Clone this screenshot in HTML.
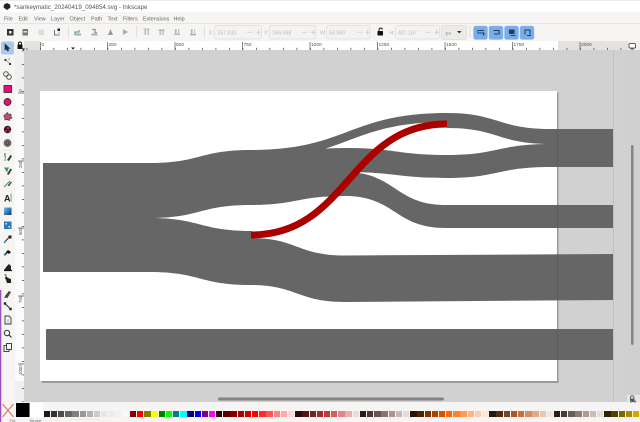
<!DOCTYPE html>
<html><head><meta charset="utf-8"><title>Inkscape</title>
<style>
html,body{margin:0;padding:0;background:#f6f5f4;width:640px;height:422px;overflow:hidden}
svg{position:absolute;left:0;top:0;font-family:"Liberation Sans",sans-serif;filter:blur(.3px)}
#pal{position:absolute;left:43.6px;top:410.7px;height:6.6px;display:flex;width:600px;filter:blur(.3px)}
#pal i{display:block;width:6.4px;margin-right:.8px;height:6.6px;flex:none}
</style></head><body>
<svg width="640" height="422" viewBox="0 0 640 422">
<defs>
<pattern id="tx" x="40" y="0" width="13.5" height="9" patternUnits="userSpaceOnUse"><rect x="0" y="6.800" width=".8" height="2.200" fill="#555"/></pattern>
<pattern id="ty" x="0" y="91" width="9" height="13.5" patternUnits="userSpaceOnUse"><rect x="6.800" y="0" width="2.200" height=".8" fill="#555"/></pattern>
<linearGradient id="g1" x1="0" y1="0" x2="1" y2="1"><stop offset="0" stop-color="#6fc0ef"/><stop offset="1" stop-color="#073a6c"/></linearGradient>
</defs>
<rect width="640" height="422" fill="#f6f5f4"/>
<rect width="640" height="12" fill="#fff"/>
<rect y="0" width="640" height="1" fill="#eceae8"/>
<rect y="23" width="640" height="1" fill="#e6e4e1"/>
<path d="M7 3l3 1.500 .5 3-3.500 2.500-3.500-2.500 .5-3z" fill="#222"/>
<text x="14" y="8.800" font-size="6.200" fill="#555">*sankeymatic_20240419_094854.svg - Inkscape</text>
<g font-size="5.400" fill="#666">
<text x="4" y="20.500">File</text><text x="18.500" y="20.500">Edit</text><text x="34" y="20.500">View</text><text x="51" y="20.500">Layer</text><text x="69.500" y="20.500">Object</text><text x="91" y="20.500">Path</text><text x="107.500" y="20.500">Text</text><text x="123" y="20.500">Filters</text><text x="143" y="20.500">Extensions</text><text x="173.500" y="20.500">Help</text>
</g>

<!-- top toolbar icons -->
<g>
<rect x="7" y="29" width="6.500" height="6.500" fill="#333"/><rect x="9" y="31" width="2.500" height="2.500" fill="#eee"/>
<rect x="22.500" y="29" width="5.500" height="6.500" fill="#777"/><rect x="23.500" y="31" width="3.500" height="1.500" fill="#ddd"/>
<rect x="38.500" y="29.500" width="5.500" height="5.500" fill="#ddd"/>
<path d="M54.500 30v5h5" fill="none" stroke="#555" stroke-width=".8"/><rect x="57.500" y="28.500" width="2.500" height="2.500" fill="#222"/><path d="M59 32v3" stroke="#999" stroke-width=".8"/>
<path d="M75 35v-3h4v-2" fill="none" stroke="#6fa887" stroke-width="1.300"/><rect x="75" y="33.500" width="6" height="2" fill="#aaa"/>
<path d="M92 29.500h3v3h2" fill="none" stroke="#6fa887" stroke-width="1.300"/><rect x="91.500" y="33.500" width="6" height="2" fill="#aaa"/>
<path d="M108 35l2.500-6 2.500 6z" fill="#999"/>
<path d="M123 29v6l5-3z" fill="#aaa"/>
<rect x="143.500" y="28.500" width="6" height="1.300" fill="#bbb"/><rect x="144.500" y="30" width="1.500" height="5" fill="#bbb"/><rect x="147.500" y="30" width="1.200" height="5" fill="#8cc5a0"/>
<rect x="158.500" y="29.500" width="6" height="1.300" fill="#aaa"/><rect x="159.500" y="31" width="1.500" height="4" fill="#bbb"/><rect x="162.500" y="31" width="1.200" height="4" fill="#8cc5a0"/>
<rect x="174" y="33.500" width="6" height="1.300" fill="#aaa"/><rect x="175" y="29" width="1.500" height="4" fill="#8cc5a0"/><rect x="178" y="29" width="1.200" height="4" fill="#bbb"/>
<rect x="190" y="34" width="6" height="1.300" fill="#aaa"/><rect x="191" y="29" width="1.500" height="5" fill="#8cc5a0"/><rect x="194" y="29" width="1.200" height="5" fill="#ccc"/>
</g>
<g fill="#e2e0dd"><rect x="68" y="26" width="1" height="12"/><rect x="136" y="26" width="1" height="12"/><rect x="204" y="26" width="1" height="12"/><rect x="469.500" y="26" width="1" height="12"/></g>

<!-- number fields -->
<g fill="#f4f3f1" stroke="#dedcd9" stroke-width=".7">
<rect x="214.500" y="25.500" width="47" height="13.500" rx="2"/>
<rect x="269.500" y="25.500" width="46.500" height="13.500" rx="2"/>
<rect x="326.500" y="25.500" width="43.500" height="13.500" rx="2"/>
<rect x="395.500" y="25.500" width="44" height="13.500" rx="2"/>
</g>
<rect x="441.500" y="25.500" width="25" height="14" rx="2" fill="#ecebe8" stroke="#dcdad7" stroke-width=".7"/>
<g font-size="5.200" fill="#bbb">
<text x="208.500" y="34.300">X:</text><text x="217.500" y="34.300">357.833</text>
<text x="264" y="34.300">Y:</text><text x="272.500" y="34.300">266.068</text>
<text x="320" y="34.300">W:</text><text x="329" y="34.300">54.580</text>
<text x="389.500" y="34.300">H:</text><text x="398" y="34.300">407.167</text>
<text x="445.500" y="34.800" fill="#999">px</text>
</g>
<path d="M457 31h4.500l-2.250 2.500z" fill="#333"/>
<g stroke="#c5c5c5" stroke-width=".7" fill="none">
<path d="M247 32.200h5M256 32.200h5M258.500 29.700v5M302 32.200h5M311 32.200h5M313.500 29.700v5M357 32.200h5M365.500 32.200h4.500M367.700 29.700v5M425 32.200h5M434 32.200h5M436.500 29.700v5"/>
</g>
<rect x="377.500" y="31" width="5.500" height="4.500" rx=".6" fill="#111"/><path d="M379 31v-1.500a1.800 1.800 0 0 1 3.500 0" fill="none" stroke="#111" stroke-width=".9"/>

<!-- snap buttons -->
<g fill="#78aceb" stroke="#9ac0ee" stroke-width=".5">
<rect x="473.500" y="26" width="14" height="13.500" rx="2"/><rect x="489" y="26" width="14" height="13.500" rx="2"/><rect x="504.500" y="26" width="14" height="13.500" rx="2"/><rect x="520" y="26" width="14" height="13.500" rx="2"/>
</g>
<g fill="#2a3b52">
<rect x="478" y="30" width="6" height="1"/><rect x="478" y="32.500" width="6.500" height="1"/><rect x="483" y="33.500" width="1.200" height="2"/><rect x="477" y="30" width="1" height="3.500" opacity=".6"/>
<rect x="493.500" y="30" width="6" height="1"/><rect x="498.500" y="31" width="1.200" height="3.500"/><rect x="494" y="33.500" width="4" height="1"/>
<rect x="509" y="29.500" width="5.500" height="4.500"/><rect x="510.500" y="35" width="5" height="1"/>
<rect x="524.500" y="29.500" width="6" height="1"/><rect x="524.500" y="29.500" width="1" height="5"/><rect x="529.500" y="29.500" width="1" height="5"/><rect x="527" y="35" width="4" height="1"/>
</g>

<!-- canvas -->
<rect x="24" y="50" width="616" height="352" fill="#d1d1d1"/>
<rect x="627" y="50" width="13" height="352" fill="#d0d0d0"/>
<rect x="41.500" y="92.500" width="517" height="290.500" fill="#9a9a9a"/>
<rect x="40" y="91" width="517" height="290" fill="#fff"/>
<rect x="613" y="50" width=".8" height="352" fill="#a9c1d6"/>

<!-- sankey -->
<g fill="#666">
<path d="M43 163H150.500V272H43Z"/>
<path d="M150 163C200 163 200 150 250.500 150V205C200 205 200 218 150 218Z"/>
<path d="M150 218C200 218 200 231 252 231V285H250C200 285 200 272 150 272Z"/>
<path d="M250 150C348 150 348 113 447.500 113V122C348 122 348 159 250 159Z"/>
<path d="M250 158C290 155 305 148 345.500 148V196C297 196 297 205 250 205Z"/>
<path d="M345 148C396 148 396 155 447.500 155V178C396 178 396 172 345 172Z"/>
<path d="M345 172C395 172 395 205 445.500 205H613V228H445C395 228 395 196 345 196Z"/>
<path d="M447 113C498 113 498 129 550 129H613V167H550C498 167 498 178 447 178V155C498 155 498 144 550 144C498 144 498 128 447 128Z"/>
<path d="M250 238C297 238 297 255.500 345 255.500L613 254V300L345 302C297 302 297 285 250 285Z"/>
<path d="M47 329H613V360H47Q46 360 46 359V330Q46 329 47 329Z"/>
</g>
<rect x="557" y="129" width="1" height="38" fill="#000" opacity=".1"/>
<rect x="557" y="205" width="1" height="23" fill="#000" opacity=".1"/>
<rect x="557" y="254" width="1" height="46" fill="#000" opacity=".1"/>
<rect x="557" y="329" width="1" height="31" fill="#000" opacity=".1"/>
<path d="M251 235C349 235 349 124 447 124" fill="none" stroke="#aa0000" stroke-width="7"/>

<!-- rulers -->
<rect x="24" y="41" width="604" height="9" fill="#e3e2de"/>
<rect x="40" y="41" width="518" height="9" fill="#fff"/>
<g transform="translate(0,41)"><rect x="24" y="0" width="604" height="9" fill="url(#tx)"/></g>
<path stroke="#555" stroke-width=".7" d="M40.500 42v8M107.500 42v8M175 42v8M242.500 42v8M310 42v8M377.500 42v8M445 42v8M512.500 42v8M580 42v8"/>
<g font-size="4.800" fill="#555">
<text x="41.500" y="46">0</text><text x="108.500" y="46">250</text><text x="176" y="46">500</text><text x="243.500" y="46">750</text><text x="311" y="46">1000</text><text x="378.500" y="46">1250</text><text x="446" y="46">1500</text><text x="513.500" y="46">1750</text><text x="581" y="46">2000</text>
</g>
<path d="M71 47.500h4l-2 2z" fill="#111"/>
<rect x="15" y="41" width="9" height="361" fill="#f1f0ee"/>
<rect x="15" y="91" width="9" height="290" fill="#fbfbfa"/>
<g transform="translate(15,0)"><rect x="0" y="50" width="9" height="352" fill="url(#ty)"/></g>
<path stroke="#555" stroke-width=".7" d="M18 93h6M18 161h6M18 228h6M18 296h6M18 364h6"/>
<g font-size="4.800" fill="#555">
<text transform="translate(22,92) rotate(-90)">0</text>
<text transform="translate(22,168) rotate(-90) scale(.9)">250</text>
<text transform="translate(22,235) rotate(-90) scale(.9)">500</text>
<text transform="translate(22,303) rotate(-90) scale(.9)">750</text>
<text transform="translate(22,375) rotate(-90) scale(.9)">1000</text>
</g>
<!-- corner lock -->
<rect x="15" y="41" width="9" height="9" fill="#f6f5f4"/>
<path d="M22 48.500h3l-1.500 2z" fill="#111"/>
<rect x="17.500" y="44.500" width="5" height="4.500" rx=".6" fill="#111"/><path d="M18.500 44.500v-1a1.500 1.500 0 0 1 3 0v1" fill="none" stroke="#111" stroke-width=".9"/>
<!-- top right / bottom right -->
<rect x="628" y="41" width="12" height="9" fill="#f0efed"/>
<rect x="629" y="43.500" width="6.500" height="4.500" rx="1" fill="#fff" stroke="#333" stroke-width=".8"/><path d="M630.500 49h3.500" stroke="#333" stroke-width=".8"/>
<rect x="627" y="395" width="13" height="8" fill="#e7e6e3"/>
<path d="M630.500 399v-1.500a1.700 1.700 0 0 1 3.400 0v1.500" fill="none" stroke="#444" stroke-width=".8"/><rect x="630" y="398.500" width="4.500" height="3.500" fill="#555"/><circle cx="631" cy="401.500" r="1.100" fill="#2e9c5b"/><circle cx="635" cy="401.500" r="1.100" fill="#d0458a"/>
<!-- scrollbars -->
<rect x="218" y="397.500" width="226" height="3" rx="1.500" fill="#848484"/>
<rect x="631" y="145" width="2.500" height="200" rx="1.200" fill="#848484"/>

<!-- left tool bar -->
<rect x="0" y="41" width="15" height="361" fill="#f6f5f4"/>
<rect x="1" y="41.500" width="13" height="13" rx="2" fill="#a9c9ee"/>
<path d="M5 44v6l1.500-1 1 2 1.200-.5-1-2h2z" fill="#1d2f45" stroke="#1d2f45" stroke-width=".6"/>
<path d="M4.500 59h2v2h-2zM9 63h2v2H9z" fill="#333"/><path d="M7 61l2 2" stroke="#888" stroke-width=".8"/><rect x="8.500" y="58.500" width="1.500" height="1.500" fill="#999"/>
<circle cx="6" cy="74" r="2.300" fill="none" stroke="#444" stroke-width=".9"/><circle cx="9" cy="77" r="2.300" fill="none" stroke="#444" stroke-width=".9"/>
<rect x="4" y="85.500" width="7.500" height="7" fill="#ee0a76" stroke="#333" stroke-width=".9"/>
<circle cx="7.500" cy="102" r="3.500" fill="#ee0a76" stroke="#333" stroke-width=".9"/>
<path d="M7.500 112.500l1.200 2 2.300-.5 0 2.500 1 1.500-2.300 1-.5 1.500-2-1-2.300.5-.2-2.500-1-1.500 1.500-1.500z" fill="#c04a80" stroke="#444" stroke-width=".7"/>
<circle cx="7.500" cy="129.500" r="3.700" fill="#222"/><circle cx="8" cy="128" r="1.300" fill="#ee0a76"/><circle cx="6" cy="131" r="1" fill="#ee0a76"/><circle cx="9.500" cy="131" r="1" fill="#ee0a76"/>
<circle cx="7.500" cy="143" r="3.500" fill="#777" stroke="#555" stroke-width=".7"/><circle cx="7.500" cy="143" r="1.500" fill="none" stroke="#333" stroke-width=".7"/>
<rect x="2" y="81.800" width="11" height=".6" fill="#e6e4e1"/>
<rect x="2" y="149.800" width="11" height=".6" fill="#e6e4e1"/>
<path d="M4.500 153.500l1 5M4 154h2M4 160h2" stroke="#3a9b58" stroke-width="1.100" fill="none"/><path d="M7 160l3.500-5 1.500 1-3 5z" fill="#333"/>
<path d="M4 167.500h5l-2 5z" fill="#3a9b58"/><path d="M7 174l3.500-5.500 1.500 1-3.500 5.500z" fill="#333"/>
<path d="M4 187l6-6" stroke="#4c9f66" stroke-width="1.200"/><path d="M7.500 185.500l3.500-4 1 .7-3 4z" fill="#444"/>
<text x="4" y="201.500" font-size="9" font-weight="bold" fill="#222">A</text><rect x="10.600" y="193.500" width=".9" height="8" fill="#2fb25a"/>
<rect x="4" y="207.500" width="7.500" height="7.500" fill="url(#g1)"/>
<rect x="4" y="221.500" width="7.500" height="7.500" fill="#2f78b5"/><path d="M5.500 223h1.500v1.500h-1.500zM8.500 226h1.500v1.500H8.500z" fill="#e6f0f8"/>
<path d="M4.500 242l5-5" stroke="#333" stroke-width="1.200"/><rect x="8.500" y="235.500" width="3" height="3" fill="#222"/><path d="M4 243l1.500-1.500" stroke="#2aa8df" stroke-width="1.500"/>
<path d="M4.500 255l4-4" stroke="#222" stroke-width="1.400"/><path d="M8 250l3 2-2 2-3-2z" fill="#111"/><path d="M4 254l1.500 1.500" stroke="#2c7fd1" stroke-width="1.500"/>
<path d="M4 270l3-4 2-2 2 2v4z" fill="#222"/><path d="M4 270.500h8" stroke="#111" stroke-width="1.200"/>
<path d="M6 276l2 2 3 1v4H7l-1-3-1-2z" fill="#222"/><circle cx="5.500" cy="275" r="1" fill="#777"/>
<path d="M5 296l4-5 2 1-3 5-3 .5z" fill="#444"/><path d="M4 297.500h4" stroke="#d0458a" stroke-width="1"/>
<path d="M5 303.500l5 5" stroke="#333" stroke-width="1.100"/><rect x="3.800" y="302.300" width="2.400" height="2.400" fill="#222"/><rect x="9.300" y="307.800" width="2.400" height="2.400" fill="#222"/>
<path d="M5 316h4l2 2v6H5z" fill="#fff" stroke="#333" stroke-width=".9"/><path d="M6.500 320h3M6.500 322h3" stroke="#555" stroke-width=".5"/>
<circle cx="7" cy="333" r="2.700" fill="none" stroke="#333" stroke-width="1"/><path d="M9 335l2.500 2.500" stroke="#333" stroke-width="1.200"/>
<rect x="4" y="345.500" width="5" height="6" fill="none" stroke="#333" stroke-width=".9"/><rect x="6.500" y="343.500" width="5" height="6" fill="#f6f5f4" stroke="#333" stroke-width=".9"/>

<!-- bottom -->
<rect x="0" y="402.500" width="640" height="20" fill="#f6f5f4"/>
<rect x="0" y="290" width="1.300" height="132" fill="#9b50bd"/>
<path d="M2.500 404l11 13M13.500 404L2.500 417" stroke="#d9807c" stroke-width="1.300"/>
<rect x="16" y="403" width="13.500" height="14" fill="#000"/>
<rect x="30" y="403" width="13.500" height="14" fill="#fff"/>
<text x="9.500" y="422" font-size="4" fill="#666">Fill:</text>
<text x="29.500" y="422" font-size="4" fill="#666">Stroke:</text>
<path d="M70 422v-2.500h29v2.500" fill="none" stroke="#dedcd9" stroke-width=".6"/>
</svg>
<div id="pal"><i style="background:#1a1a1a"></i><i style="background:#333"></i><i style="background:#4d4d4d"></i><i style="background:#666"></i><i style="background:#808080"></i><i style="background:#999"></i><i style="background:#b3b3b3"></i><i style="background:#ccc"></i><i style="background:#e6e6e6"></i><i style="background:#ececec"></i><i style="background:#f2f2f2"></i><i style="background:#f9f9f9"></i><i style="background:#800000"></i><i style="background:#f00"></i><i style="background:#808000"></i><i style="background:#ff0"></i><i style="background:#008000"></i><i style="background:#0f0"></i><i style="background:#008080"></i><i style="background:#0ff"></i><i style="background:#000080"></i><i style="background:#00f"></i><i style="background:#800080"></i><i style="background:#f0f"></i><i style="background:#2b0000"></i><i style="background:#500"></i><i style="background:#800000"></i><i style="background:#a00"></i><i style="background:#d40000"></i><i style="background:#f00"></i><i style="background:#ff2a2a"></i><i style="background:#f55"></i><i style="background:#ff8080"></i><i style="background:#faa"></i><i style="background:#ffd5d5"></i><i style="background:#280b0b"></i><i style="background:#501616"></i><i style="background:#782121"></i><i style="background:#a02c2c"></i><i style="background:#c83737"></i><i style="background:#d35f5f"></i><i style="background:#de8787"></i><i style="background:#e9afaf"></i><i style="background:#f4d7d7"></i><i style="background:#241c1c"></i><i style="background:#483737"></i><i style="background:#6c5353"></i><i style="background:#916f6f"></i><i style="background:#ac9393"></i><i style="background:#c8b7b7"></i><i style="background:#e3dbdb"></i><i style="background:#2b1100"></i><i style="background:#520"></i><i style="background:#803300"></i><i style="background:#a40"></i><i style="background:#d45500"></i><i style="background:#f60"></i><i style="background:#ff7f2a"></i><i style="background:#f95"></i><i style="background:#ffb380"></i><i style="background:#fca"></i><i style="background:#ffe6d5"></i><i style="background:#28170b"></i><i style="background:#502d16"></i><i style="background:#784421"></i><i style="background:#a05a2c"></i><i style="background:#c87137"></i><i style="background:#d38d5f"></i><i style="background:#deaa87"></i><i style="background:#e9c6af"></i><i style="background:#f4e3d7"></i><i style="background:#241f1c"></i><i style="background:#483e37"></i><i style="background:#6c5d53"></i><i style="background:#917c6f"></i><i style="background:#ac9d93"></i><i style="background:#c8beb7"></i><i style="background:#e3dedb"></i><i style="background:#2b2200"></i><i style="background:#540"></i><i style="background:#806600"></i><i style="background:#a80"></i><i style="background:#d4aa00"></i></div>
</body></html>
